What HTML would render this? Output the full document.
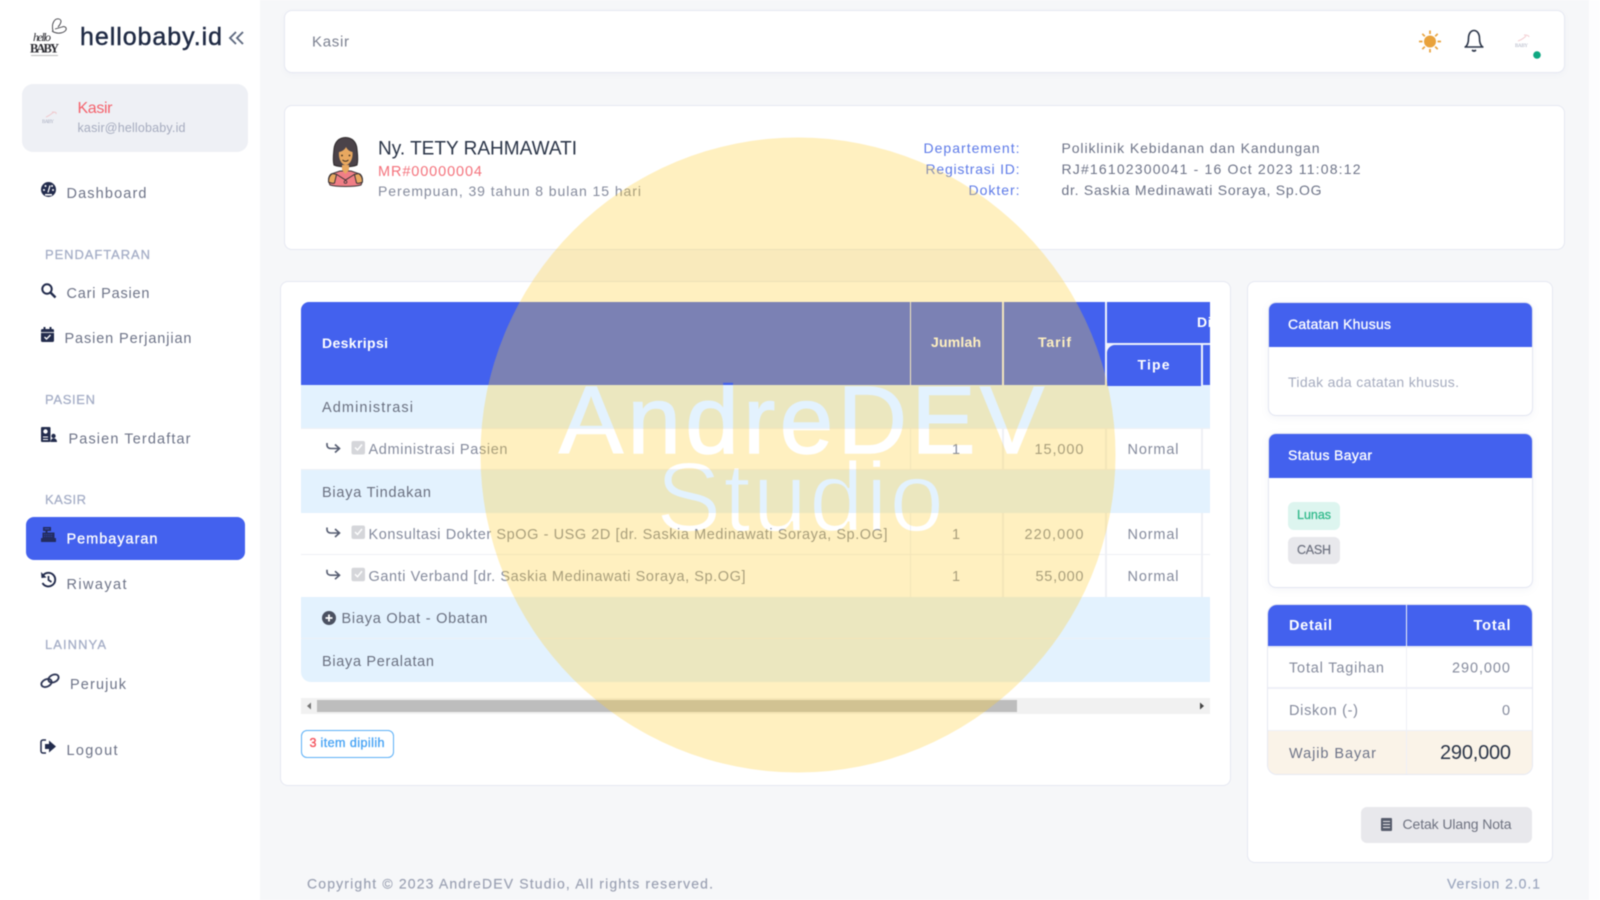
<!DOCTYPE html>
<html lang="id">
<head>
<meta charset="utf-8">
<title>Kasir - hellobaby.id</title>
<style>
html,body{margin:0;padding:0;width:1600px;height:900px;overflow:hidden;background:#fff;}
#w{position:relative;width:1600px;height:900px;overflow:hidden;background:#f6f7f9;filter:blur(.4px);}
.a{position:absolute;box-sizing:border-box;}
.card{background:#fff;border:1px solid #e6e8f2;border-radius:8px;}
svg{position:absolute;left:0;top:0;}
text{font-family:"Liberation Sans",sans-serif;white-space:pre;}
</style>
</head>
<body>
<div id="w">
  <!-- sidebar -->
  <div class="a" style="left:0;top:0;width:260px;height:900px;background:#fff"></div>
  <div class="a" style="left:1589px;top:0;width:11px;height:900px;background:#fdfdfe"></div>
  <div class="a" style="left:22px;top:84px;width:226px;height:68px;background:#eef0f5;border-radius:11px"></div>
  <div class="a" style="left:25.500px;top:517px;width:219px;height:43px;background:#4361ee;border-radius:8px"></div>

  <!-- top bar + patient -->
  <div class="a card" style="left:284px;top:10px;width:1281px;height:63px;box-shadow:0 2px 6px rgba(120,130,170,.05)"></div>
  <div class="a card" style="left:284px;top:105px;width:1281px;height:145px"></div>

  <!-- main card -->
  <div class="a card" style="left:280px;top:281px;width:951px;height:505px"></div>
  <div class="a" style="left:301px;top:302px;width:909px;height:380px;overflow:hidden;border-radius:8px 0 0 10px;background:#fff">
    <div class="a" style="left:0;top:0;width:909px;height:83px;background:#4361ee"></div>
    <div class="a" style="left:0;top:83px;width:909px;height:44px;background:#e3f2fe;border-bottom:1px solid #eef0f5"></div>
    <div class="a" style="left:0;top:168px;width:909px;height:43px;background:#e3f2fe"></div>
    <div class="a" style="left:0;top:127px;width:909px;height:41px;border-bottom:1.5px solid #eef0f5"></div>
    <div class="a" style="left:0;top:211px;width:909px;height:42px;border-bottom:1.5px solid #eef0f5"></div>
    <div class="a" style="left:0;top:295px;width:909px;height:42px;background:#e3f2fe;border-bottom:1px solid #eef0f5"></div>
    <div class="a" style="left:0;top:337px;width:909px;height:43px;background:#e3f2fe"></div>
    <!-- column lines header -->
    <div class="a" style="left:608.500px;top:0;width:1.500px;height:83px;background:#eef1fc"></div>
    <div class="a" style="left:701px;top:0;width:1.500px;height:83px;background:#eef1fc"></div>
    <div class="a" style="left:804px;top:0;width:1.500px;height:83px;background:#eef1fc"></div>
    <div class="a" style="left:805px;top:41px;width:104px;height:1.500px;background:#eef1fc"></div>
    <div class="a" style="left:900px;top:41px;width:1.500px;height:42px;background:#eef1fc"></div>
    <div class="a" style="left:805px;top:42px;width:8px;height:8px;background:#eef1fc"></div>
    <div class="a" style="left:805.500px;top:42.500px;width:94.500px;height:41px;background:#4361ee;border-radius:8px 0 0 0"></div>
    <!-- column lines body -->
    <div class="a" style="left:608.500px;top:127px;width:1.500px;height:41px;background:#eef0f5"></div>
    <div class="a" style="left:701px;top:127px;width:1.500px;height:41px;background:#eef0f5"></div>
    <div class="a" style="left:804px;top:127px;width:1.500px;height:41px;background:#eef0f5"></div>
    <div class="a" style="left:900px;top:127px;width:1.500px;height:41px;background:#eef0f5"></div>
    <div class="a" style="left:608.500px;top:211px;width:1.500px;height:84px;background:#eef0f5"></div>
    <div class="a" style="left:701px;top:211px;width:1.500px;height:84px;background:#eef0f5"></div>
    <div class="a" style="left:804px;top:211px;width:1.500px;height:84px;background:#eef0f5"></div>
    <div class="a" style="left:900px;top:211px;width:1.500px;height:84px;background:#eef0f5"></div>
  </div>

  <!-- scrollbar -->
  <div class="a" style="left:301px;top:698px;width:909px;height:16px;background:#f1f1f1"></div>
  <div class="a" style="left:317px;top:700px;width:700px;height:12px;background:#bdbdbd"></div>
  <!-- badge -->
  <div class="a" style="left:301px;top:730px;width:93px;height:28px;border:1.500px solid #5cb0f7;border-radius:6px;background:#fff"></div>

  <!-- right card -->
  <div class="a card" style="left:1247px;top:281px;width:306px;height:582px"></div>
  <div class="a card" style="left:1267.500px;top:302px;width:265px;height:114px;overflow:hidden;border-color:#e3e6f2;box-shadow:0 2px 8px rgba(120,130,170,.08)">
    <div style="height:44px;background:#4361ee"></div>
  </div>
  <div class="a card" style="left:1267.500px;top:433px;width:265px;height:155px;overflow:hidden;border-color:#e3e6f2;box-shadow:0 2px 8px rgba(120,130,170,.08)">
    <div style="height:44px;background:#4361ee"></div>
  </div>
  <div class="a" style="left:1288px;top:502px;width:52px;height:28px;background:#ddf5ef;border-radius:6px"></div>
  <div class="a" style="left:1288px;top:537px;width:52px;height:27px;background:#e8e8ec;border-radius:6px"></div>

  <!-- detail table -->
  <div class="a" style="left:1268px;top:605px;width:264px;height:169px;overflow:hidden;border-radius:9px;background:#fff;box-shadow:0 0 0 1px #e6e8f2">
    <div class="a" style="left:0;top:0;width:264px;height:41px;background:#4361ee"></div>
    <div class="a" style="left:0;top:82px;width:264px;height:1.500px;background:#eef0f7"></div>
    <div class="a" style="left:0;top:41px;width:264px;height:1.500px;background:#eef0f7"></div>
    <div class="a" style="left:0;top:125px;width:264px;height:44px;background:#faf3e8;border-top:1.500px solid #eef0f7"></div>
    <div class="a" style="left:137.500px;top:0;width:1.500px;height:169px;background:#eef0f7"></div>
  </div>
  <!-- button -->
  <div class="a" style="left:1361px;top:807px;width:171px;height:36px;background:#e8e8ec;border-radius:6px"></div>

  <!-- text + icons -->
  <svg width="1600" height="900" viewBox="0 0 1600 900">
    <defs>
      <clipPath id="tc"><rect x="301" y="302" width="909" height="83"/></clipPath>
    </defs>

    <!-- logo -->
    <text x="33" y="41" font-size="12" font-style="italic" fill="#2a2a30" textLength="18" style="font-family:'Liberation Serif',serif">hello</text>
    <text x="30" y="52.500" font-size="12.500" font-weight="bold" fill="#2a2a30" textLength="29" style="font-family:'Liberation Serif',serif">BABY</text>
    <path d="M53 31 C51 23 55 18 59 19 C63 20 60 25 58 27 M52 31 C56 34 63 34 66 30 C67 27 64 26 62 27 L55 29" fill="none" stroke="#3a3a40" stroke-width=".9"/>
    <rect x="31" y="55" width="27" height="1" fill="#bbb"/>
    <text x="80" y="45" font-size="25" fill="#1f2a44" stroke="#1f2a44" stroke-width=".45" textLength="142">hellobaby.id</text>
    <path d="M236 32 L230 38 L236 44 M243 32 L237 38 L243 44" fill="none" stroke="#5f6a80" stroke-width="1.900"/>

    <!-- sidebar user -->
    <text x="42" y="123" font-size="5" fill="#a9aec0" textLength="12" style="font-family:'Liberation Serif',serif">BABY</text>
    <path d="M46 117 c3-1 5-3 8-5 M52 112 c2 0 5 0 4 2" fill="none" stroke="#f0c8cc" stroke-width="1"/>
    <text x="77.500" y="113" font-size="16" fill="#f4626c" textLength="35">Kasir</text>
    <text x="77.500" y="132" font-size="12.500" fill="#a6acbf" textLength="108">kasir@hellobaby.id</text>

    <!-- nav labels -->
    <g font-size="14.500" fill="#6e7488">
      <text x="66.500" y="198" textLength="80">Dashboard</text>
      <text x="66.500" y="298" textLength="83">Cari Pasien</text>
      <text x="64.500" y="343" textLength="127">Pasien Perjanjian</text>
      <text x="68.500" y="443.500" textLength="122">Pasien Terdaftar</text>
      <text x="66.500" y="589" textLength="60">Riwayat</text>
      <text x="70" y="689" textLength="56">Perujuk</text>
      <text x="66.500" y="755" textLength="51">Logout</text>
    </g>
    <text x="66.500" y="543.500" font-size="14.500" fill="#fff" stroke="#fff" stroke-width=".3" textLength="91">Pembayaran</text>
    <g font-size="13" fill="#a4adc6" stroke="#a4adc6" stroke-width=".25">
      <text x="45" y="259" textLength="105">PENDAFTARAN</text>
      <text x="45" y="404" textLength="50">PASIEN</text>
      <text x="45" y="504" textLength="41">KASIR</text>
      <text x="45" y="649" textLength="61">LAINNYA</text>
    </g>

    <!-- nav icons -->
    <circle cx="48.500" cy="189.500" r="7.500" fill="#232c4d"/>
    <path d="M48 192.500 L50 185.500" stroke="#fff" stroke-width="1.300"/>
    <g fill="#fff"><circle cx="44" cy="190" r="1"/><circle cx="45.500" cy="186" r="1"/><circle cx="53" cy="190" r="1"/><circle cx="52" cy="186" r="1"/><rect x="45" y="194" width="7" height="1.600"/></g>
    <circle cx="47" cy="289" r="4.700" fill="none" stroke="#232c4d" stroke-width="2"/>
    <path d="M50.500 292.500 L55.500 297.500" stroke="#232c4d" stroke-width="2.400"/>
    <rect x="41" y="329" width="13" height="13" rx="1.500" fill="#232c4d"/>
    <rect x="43.500" y="327" width="2" height="3" fill="#232c4d"/><rect x="49.500" y="327" width="2" height="3" fill="#232c4d"/>
    <path d="M41 332.500 H54" stroke="#fff" stroke-width=".8"/>
    <path d="M44.500 337 l2 2 l4-4" fill="none" stroke="#fff" stroke-width="1.400"/>
    <rect x="41" y="427" width="9.500" height="15" rx="1" fill="#232c4d"/>
    <circle cx="45.500" cy="431.500" r="2.200" fill="#fff"/><path d="M43 437 h5 M43 439.500 h5" stroke="#fff" stroke-width="1"/>
    <circle cx="53.500" cy="436" r="2.200" fill="#232c4d"/>
    <path d="M50.500 442 c0-5 6.500-5 6.500 0z" fill="#232c4d"/>
    <g fill="#232c5e"><rect x="43" y="527" width="8" height="4"/><rect x="45.500" y="531" width="2" height="2"/><rect x="42.500" y="532.500" width="12" height="5.500"/><rect x="41" y="538" width="15" height="4" rx=".5"/></g>
    <path d="M44 534.500 h9 M44 536.500 h9" stroke="#4361ee" stroke-width=".6" stroke-dasharray="1.200 1"/>
    <path d="M44.500 528.800 h5" stroke="#4361ee" stroke-width=".6"/>
    <path d="M42.500 583 A6.800 6.800 0 1 0 43 575.500" fill="none" stroke="#232c4d" stroke-width="1.900"/>
    <path d="M41 572 L41.500 578 L46.500 577.500 Z" fill="#232c4d"/>
    <path d="M48.500 576 V580 L51.500 582" fill="none" stroke="#232c4d" stroke-width="1.700"/>
    <ellipse cx="46.500" cy="683" rx="5.400" ry="3.700" transform="rotate(-25 46.500 683)" fill="none" stroke="#2f3756" stroke-width="1.800"/>
    <ellipse cx="53.500" cy="678.500" rx="5.400" ry="3.700" transform="rotate(-25 53.500 678.500)" fill="none" stroke="#2f3756" stroke-width="1.800"/>
    <path d="M46 740 h-3 a2 2 0 0 0 -2 2 v9 a2 2 0 0 0 2 2 h3" fill="none" stroke="#232c4d" stroke-width="1.500"/>
    <path d="M45 744 h4 v-3.500 l7 6 -7 6 v-3.500 h-4z" fill="#232c4d"/>

    <!-- top bar -->
    <text x="312" y="46.500" font-size="15" fill="#7b8090" textLength="37">Kasir</text>
    <circle cx="1430" cy="41.500" r="6" fill="#e9a23b"/>
    <path d="M1430 30.500 v3.500 M1430 49 v3.500 M1419 41.500 h3.500 M1437.500 41.500 h3.500 M1422.300 33.800 l2.500 2.500 M1435.200 46.700 l2.500 2.500 M1437.700 33.800 l-2.500 2.500 M1424.800 46.700 l-2.500 2.500" stroke="#e9a23b" stroke-width="1.700"/>
    <path d="M1464.500 47 h19 M1465.500 47 c2.200-2 3-4.500 3-8.500 c0-5 2.500-8 5.500-8 s5.500 3 5.500 8 c0 4 .8 6.500 3 8.500 M1472 50 q2 2 4 0" fill="none" stroke="#2b3548" stroke-width="1.600"/>
    <text x="1515" y="47" font-size="5" fill="#a9aec0" textLength="13" style="font-family:'Liberation Serif',serif">BABY</text>
    <path d="M1518 41 c3-1 6-3 8-5 M1524 35 c2 0 5 0 5 2" fill="none" stroke="#f3cdd1" stroke-width="1"/>
    <circle cx="1537" cy="55" r="3.800" fill="#0ea882"/>

    <!-- patient avatar -->
    <path d="M330 185 c-2-4-2-8 1-11 l9-3 h11 l9 3 c3 3 3 7 1 11 c-6 2-25 2-31 0z" fill="#f07e86" stroke="#3b3436" stroke-width="1"/>
    <path d="M328.500 182 c0-4 1-7 4-8.500 l4 1 l-2 8.500 c-2 1-4 0-6-1z M362.500 182 c0-4-1-7-4-8.500 l-4 1 l2 8.500 c2 1 4 0 6-1z" fill="#e8a860" stroke="#3b3436" stroke-width="1"/>
    <path d="M334 165 c-1.500-5-.5-11 0-16 c.7-7 5-11.500 11.500-11.500 c6.500 0 11 4.500 11.500 11.500 c.5 5 1.500 11 0 16 c-6 2.500-17 2.500-23 0z" fill="#4b4349" stroke="#2e2a2c" stroke-width="1"/>
    <path d="M339 152 c3-.5 6-2.500 7-5 c1.500 3 4 4.500 6.500 5 c.8 7-3 13-6.800 13 c-3.800 0-7.500-6-6.700-13z" fill="#e8a860"/>
    <path d="M342 165 v5 l3.500 4 l3.500-4 v-5z" fill="#e8a860"/>
    <path d="M336 174 l9.500 6 l9.500-6" fill="none" stroke="#3b3436" stroke-width="1"/>
    <path d="M342.500 160 q3 2.500 6 0" fill="none" stroke="#3b2c20" stroke-width="1"/>
    <circle cx="342" cy="155.500" r=".9" fill="#3b2c20"/><circle cx="349.500" cy="155.500" r=".9" fill="#3b2c20"/>
    <circle cx="345.500" cy="182" r="1.400" fill="none" stroke="#3b3436" stroke-width=".8"/>

    <!-- patient text -->
    <text x="378" y="154.500" font-size="19" fill="#2b3548" textLength="199">Ny. TETY RAHMAWATI</text>
    <text x="378" y="176" font-size="14.500" fill="#f4727c" textLength="104">MR#00000004</text>
    <text x="378" y="196" font-size="14" fill="#858b9d" textLength="263">Perempuan, 39 tahun 8 bulan 15 hari</text>
    <g font-size="14" fill="#5d7ae8">
      <text x="923.500" y="153" textLength="96">Departement:</text>
      <text x="925.500" y="174" textLength="94">Registrasi ID:</text>
      <text x="968.500" y="195" textLength="51">Dokter:</text>
    </g>
    <g font-size="14" fill="#6e7488">
      <text x="1061.500" y="153" textLength="258">Poliklinik Kebidanan dan Kandungan</text>
      <text x="1061.500" y="174" textLength="299">RJ#16102300041 - 16 Oct 2023 11:08:12</text>
      <text x="1061.500" y="195" textLength="260">dr. Saskia Medinawati Soraya, Sp.OG</text>
    </g>

    <!-- table header -->
    <g font-size="14" font-weight="bold" fill="#fff" clip-path="url(#tc)">
      <text x="322" y="348" textLength="66">Deskripsi</text>
      <text x="931" y="347" textLength="50">Jumlah</text>
      <text x="1038" y="347" textLength="33">Tarif</text>
      <text x="1197" y="327" textLength="50">Diskon</text>
      <text x="1137.500" y="369.500" textLength="32">Tipe</text>
    </g>

    <!-- group rows -->
    <g font-size="14.500" fill="#6a7080">
      <text x="322" y="412" textLength="91">Administrasi</text>
      <text x="322" y="497" textLength="109">Biaya Tindakan</text>
      <text x="341.500" y="623" textLength="146">Biaya Obat - Obatan</text>
      <text x="322" y="666" textLength="112">Biaya Peralatan</text>
    </g>
    <circle cx="329" cy="618" r="7" fill="#4b5161"/>
    <path d="M329 614.500 v7 M325.500 618 h7" stroke="#fff" stroke-width="1.800"/>

    <!-- item rows -->
    <g font-size="14.500" fill="#858b9d">
      <text x="368.500" y="454" textLength="139">Administrasi Pasien</text>
      <text x="368.500" y="539" textLength="519">Konsultasi Dokter SpOG - USG 2D [dr. Saskia Medinawati Soraya, Sp.OG]</text>
      <text x="368.500" y="581" textLength="377">Ganti Verband [dr. Saskia Medinawati Soraya, Sp.OG]</text>
      <text x="952" y="454">1</text><text x="952" y="539">1</text><text x="952" y="581">1</text>
      <text x="1034.500" y="454" textLength="49">15,000</text>
      <text x="1024.500" y="539" textLength="59">220,000</text>
      <text x="1035.500" y="581" textLength="48">55,000</text>
      <text x="1127.500" y="454" textLength="51">Normal</text>
      <text x="1127.500" y="539" textLength="51">Normal</text>
      <text x="1127.500" y="581" textLength="51">Normal</text>
    </g>
    <g>
      <path d="M327 443 v2 c0 2.500 2 3.500 4 3.500 h8 M335 444.500 l4.500 4 -4.500 4" fill="none" stroke="#555c70" stroke-width="1.600"/>
      <rect x="351.500" y="441" width="13.500" height="13.500" rx="2" fill="#d5d6da"/>
      <path d="M355 447.500 l2.500 2.500 l4.500-5.500" fill="none" stroke="#fff" stroke-width="1.400"/>
    </g>
    <g transform="translate(0 84.500)">
      <path d="M327 443 v2 c0 2.500 2 3.500 4 3.500 h8 M335 444.500 l4.500 4 -4.500 4" fill="none" stroke="#555c70" stroke-width="1.600"/>
      <rect x="351.500" y="441" width="13.500" height="13.500" rx="2" fill="#d5d6da"/>
      <path d="M355 447.500 l2.500 2.500 l4.500-5.500" fill="none" stroke="#fff" stroke-width="1.400"/>
    </g>
    <g transform="translate(0 126.700)">
      <path d="M327 443 v2 c0 2.500 2 3.500 4 3.500 h8 M335 444.500 l4.500 4 -4.500 4" fill="none" stroke="#555c70" stroke-width="1.600"/>
      <rect x="351.500" y="441" width="13.500" height="13.500" rx="2" fill="#d5d6da"/>
      <path d="M355 447.500 l2.500 2.500 l4.500-5.500" fill="none" stroke="#fff" stroke-width="1.400"/>
    </g>

    <!-- scroll arrows -->
    <path d="M311 702.500 l-4 3.500 l4 3.500z" fill="#777"/>
    <path d="M1200 702.500 l4 3.500 l-4 3.500z" fill="#444"/>

    <!-- badge -->
    <text x="309.500" y="747" font-size="12.500" fill="#f4525c" stroke="#f4525c" stroke-width=".35">3</text>
    <text x="320.500" y="747" font-size="12.500" fill="#4aa5f5" stroke="#4aa5f5" stroke-width=".35" textLength="64">item dipilih</text>

    <!-- right cards -->
    <g font-size="14" fill="#fff" stroke="#fff" stroke-width=".3">
      <text x="1288" y="329" textLength="103">Catatan Khusus</text>
      <text x="1288" y="460" textLength="84">Status Bayar</text>
    </g>
    <text x="1288" y="387" font-size="14" fill="#a6acbf" textLength="171">Tidak ada catatan khusus.</text>
    <text x="1297" y="519" font-size="12.500" fill="#2fb98a" stroke="#2fb98a" stroke-width=".25" textLength="34">Lunas</text>
    <text x="1297" y="554" font-size="12.500" fill="#6e7280" stroke="#6e7280" stroke-width=".2" textLength="34">CASH</text>

    <!-- detail table -->
    <g font-size="14.500" font-weight="bold" fill="#fff">
      <text x="1289" y="630" textLength="43">Detail</text>
      <text x="1473.500" y="630" textLength="37">Total</text>
    </g>
    <g font-size="14.500" fill="#858b9d">
      <text x="1289" y="672.500" textLength="95">Total Tagihan</text>
      <text x="1452" y="672.500" textLength="58">290,000</text>
      <text x="1289" y="715" textLength="69">Diskon (-)</text>
      <text x="1502" y="715" textLength="8">0</text>
    </g>
    <text x="1289" y="758" font-size="14.500" fill="#6e7488" textLength="87">Wajib Bayar</text>
    <text x="1440" y="759" font-size="20" fill="#2b3548" textLength="71">290,000</text>

    <!-- button -->
    <rect x="1381" y="818" width="11" height="13" rx="1" fill="#555b6b"/>
    <path d="M1383 821.500 h7 M1383 824.500 h7 M1383 827.500 h7" stroke="#e8e8ec" stroke-width="1"/>
    <text x="1402.500" y="829" font-size="14" fill="#6e7280" textLength="109">Cetak Ulang Nota</text>

    <!-- footer -->
    <text x="307" y="888.500" font-size="14" fill="#9aa0b2" stroke="#9aa0b2" stroke-width=".15" textLength="406">Copyright © 2023 AndreDEV Studio, All rights reserved.</text>
    <text x="1447" y="888.500" font-size="14" fill="#9aa5bd" stroke="#9aa5bd" stroke-width=".15" textLength="93">Version 2.0.1</text>
  </svg>

  <!-- watermark -->
  <svg width="1600" height="900" viewBox="0 0 1600 900" style="pointer-events:none">
    <defs>
      <mask id="wm" maskUnits="userSpaceOnUse" x="0" y="0" width="1600" height="900">
        <rect x="0" y="0" width="1600" height="900" fill="#fff"/>
        <text x="559" y="453" font-size="96" fill="#000" stroke="#000" stroke-width="1.500" textLength="485">AndreDEV</text>
        <text x="656" y="531" font-size="98" fill="#000" stroke="#fff" stroke-width="1.800" textLength="288">Studio</text>
      </mask>
    </defs>
    <circle cx="798" cy="455" r="317.500" fill="rgba(255,205,45,.3)" mask="url(#wm)"/>
  </svg>
</div>
</body>
</html>
